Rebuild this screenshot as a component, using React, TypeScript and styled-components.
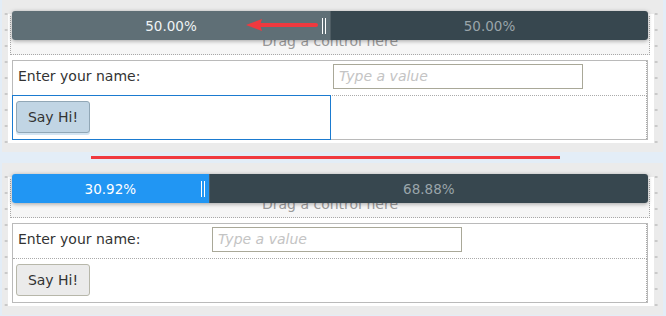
import styled, { createGlobalStyle } from 'styled-components';

const GlobalStyle = createGlobalStyle`
  html, body {
    margin: 0;
    padding: 0;
    background: #e3edf7;
    font-family: 'DejaVu Sans', Verdana, sans-serif;
    overflow: hidden;
  }
`;

const Page = styled.div`
  width: 666px;
  height: 316px;
  display: flex;
  flex-direction: column;
`;

const Panel = styled.div`
  position: relative;
  margin: 0 3px 0 2px;
  padding: 14px 9px 9px 6px;
  background-color: #ebebeb;
  background-image: radial-gradient(circle, #c9c9c9 1.1px, transparent 1.5px);
  background-size: 16.25px 16px;
  background-position: -4px 6px;
`;

const Canvas = styled.div`
  background: #fff;
  padding: 2px 4px 3px 2px;
`;

const DropZone = styled.div`
  height: 39px;
  box-sizing: border-box;
  background: #f6f6f6;
  border: 1px dotted #a8a8a8;
  border-top: none;
  display: flex;
  align-items: flex-end;
  justify-content: center;
  padding-bottom: 5px;
  font-size: 14px;
  color: #9a9a9a;
`;

const SplitBar = styled.div`
  position: absolute;
  top: 11px;
  left: 10px;
  width: 636px;
  height: 29px;
  display: flex;
  border-radius: 3px;
  overflow: hidden;
  box-shadow: 0 1px 4px rgba(0, 0, 0, 0.35);
  font-size: 13.5px;
`;

const BarPart = styled.div<{ $bg: string; $fg: string }>`
  position: relative;
  background: ${(p) => p.$bg};
  color: ${(p) => p.$fg};
  display: flex;
  align-items: center;
  justify-content: center;
  flex-shrink: 0;
`;

const BarRest = styled(BarPart)`
  flex: 1;
  border-left: 1px solid rgba(255, 255, 255, 0.12);
`;

const Handle = styled.div`
  position: absolute;
  right: 4px;
  top: 7px;
  width: 2px;
  height: 16px;
  border-left: 1px solid #fff;
  border-right: 1px solid #fff;
`;

const Arrow = styled.svg`
  position: absolute;
  left: 243px;
  top: 18px;
`;

const Table = styled.div<{ $split: number }>`
  margin: 5px 2px 0 2px;
  border: 1px solid #bababa;
  display: grid;
  grid-template-columns: ${(p) => p.$split}% 1fr;
  grid-template-rows: 35px 43px;
  font-size: 14px;
  color: #333;
`;

const Cell = styled.div<{ $right?: boolean; $bottom?: boolean; $selected?: boolean }>`
  position: relative;
  display: flex;
  align-items: center;
  padding: 0 3px 0 ${(p) => (p.$right ? '4px' : '3px')};
  border-right: ${(p) => (p.$right ? '1px dotted #aaa' : 'none')};
  border-bottom: ${(p) => (p.$bottom ? '1px dotted #aaa' : 'none')};
  margin-left: ${(p) => (p.$right ? '-1px' : '0')};
  &::after {
    content: '';
    display: ${(p) => (p.$selected ? 'block' : 'none')};
    position: absolute;
    inset: -1px;
    border: 1px solid #1b7bd0;
  }
`;

const Label = styled.span`
  padding-left: 2px;
  margin-top: -5px;
`;

const TextInput = styled.input`
  width: 250px;
  height: 25px;
  box-sizing: border-box;
  border: 1px solid #a9a898;
  margin-top: -4px;
  padding: 0 5px;
  font-family: 'DejaVu Sans', Verdana, sans-serif;
  font-size: 14px;
  font-style: italic;
  outline: none;
  &::placeholder {
    color: #c4c4c4;
  }
`;

const Button = styled.button<{ $selected?: boolean }>`
  width: 74px;
  height: 32px;
  border-radius: 3px;
  border: 1px solid ${(p) => (p.$selected ? '#91a7b6' : '#b7b7aa')};
  background: ${(p) => (p.$selected ? '#c1d5e4' : '#ebebeb')};
  box-shadow: ${(p) => (p.$selected ? '0 2px 0 #d4e5f3' : 'none')};
  font-family: 'DejaVu Sans', Verdana, sans-serif;
  font-size: 14px;
  color: #333;
  padding: 0;
  margin-top: -2px;
`;

const Divider = styled.div`
  height: 11px;
  display: flex;
  align-items: flex-start;
`;

const RedLine = styled.div`
  margin: 4px 0 0 91px;
  width: 469px;
  height: 3px;
  background: #f0393f;
`;

type Split = {
  left: number;
  leftLabel: string;
  rightLabel: string;
  leftBg: string;
  leftFg: string;
  selected?: boolean;
  arrow?: boolean;
};

const Section = ({ left, leftLabel, rightLabel, leftBg, leftFg, selected, arrow }: Split) => (
  <Panel>
    <Canvas>
      <DropZone>Drag a control here</DropZone>
      <Table $split={left}>
        <Cell $bottom>
          <Label>Enter your name:</Label>
        </Cell>
        <Cell $right $bottom>
          <TextInput placeholder="Type a value" />
        </Cell>
        <Cell $selected={selected}>
          <Button $selected={selected}>Say Hi!</Button>
        </Cell>
        <Cell $right />
      </Table>
    </Canvas>
    <SplitBar>
      <BarPart $bg={leftBg} $fg={leftFg} style={{ width: `${left}%` }}>
        {leftLabel}
        <Handle />
      </BarPart>
      <BarRest $bg="#37474f" $fg="#9aa5aa">
        {rightLabel}
      </BarRest>
    </SplitBar>
    {arrow && (
      <Arrow width="74" height="14" viewBox="0 0 74 14">
        <path d="M12 7 H71" stroke="#f0393f" strokeWidth="4" strokeLinecap="round" />
        <path d="M1 7 L17 1 L15 7 L17 13 Z" fill="#f0393f" />
      </Arrow>
    )}
  </Panel>
);

const App = () => (
  <Page>
    <GlobalStyle />
    <Section
      left={50}
      leftLabel="50.00%"
      rightLabel="50.00%"
      leftBg="#5f6f76"
      leftFg="#eef3f5"
      selected
      arrow
    />
    <Divider>
      <RedLine />
    </Divider>
    <Section
      left={30.92}
      leftLabel="30.92%"
      rightLabel="68.88%"
      leftBg="#2196f3"
      leftFg="#ffffff"
    />
  </Page>
);

export default App;
